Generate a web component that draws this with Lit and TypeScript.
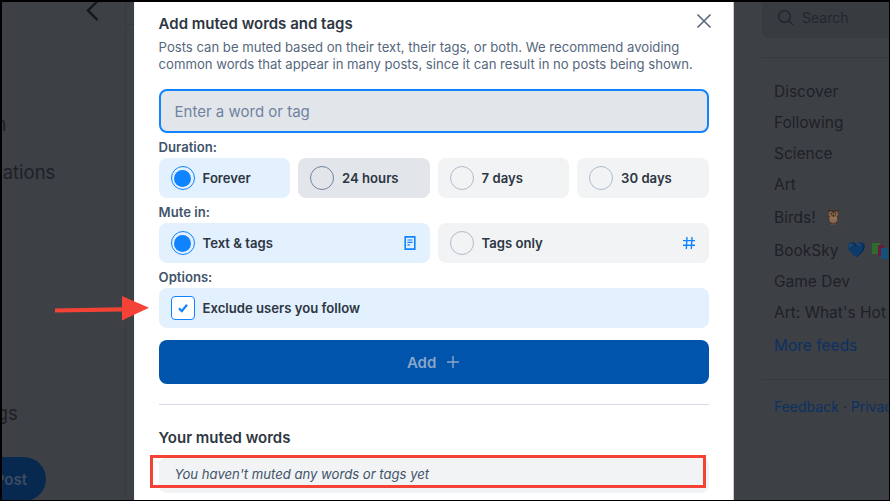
import { LitElement, html, css } from "lit";
import { customElement } from "lit/decorators.js";

const radio = (label: string, on: boolean, extra = "", icon: unknown = "") => html`
  <div class="opt ${on ? "on" : ""} ${extra}">
    <span class="radio"><i></i></span><span class="optlabel">${label}</span>${icon}
  </div>`;

const docIcon = html`<svg class="endicon" viewBox="0 0 14 14" width="14" height="14" fill="none">
  <path d="M2.2.9h9.6v12.2H2.2z" stroke="#1083fe" stroke-width="1.6"/>
  <path d="M4.4 4h5.2M4.4 6.4h5.2M4.4 8.8h2.6" stroke="#1083fe" stroke-width="1.2"/>
</svg>`;
const hashIcon = html`<svg class="endicon" viewBox="0 0 14 14" width="14" height="14" fill="none" stroke="#1083fe" stroke-width="1.4">
  <path d="M5 1 4.3 13M10 1 9.3 13M1 4.6h12M1 9.2h12"/>
</svg>`;

@customElement("app-root")
export class AppRoot extends LitElement {
  static styles = css`
    :host { display: block; width: 890px; height: 501px; font-family: Inter, "Liberation Sans", sans-serif; }
    * { box-sizing: border-box; }
    .frame { position: relative; width: 890px; height: 501px; background: #000; padding: 2px 1px 1px 2px; overflow: hidden; }
    .page { display: flex; height: 498px; background: #3d4045; overflow: hidden; }

    .left { position: relative; width: 132px; flex: none; overflow: hidden; color: #1d2127; font-size: 18.5px; }
    .rule-v { height: 100%; width: 124px; border-right: 1px solid #373a3f; }
    .rule-h { position: absolute; left: 123px; top: 22px; width: 10px; border-top: 1px solid #373a3f; }
    .chev { position: absolute; left: 83px; top: -4px; }
    .nav { position: absolute; white-space: nowrap; line-height: 22px; }
    .nav.a { left: -57px; top: 111px; }
    .nav.b { left: -57px; top: 159px; }
    .nav.c { left: -55px; top: 400px; }
    .post { position: absolute; left: -60px; top: 455px; width: 104px; height: 44px; border-radius: 22px; background: #08294f; color: #3d4c5f; font-size: 15px; font-weight: 600; display: flex; align-items: center; justify-content: flex-end; padding-right: 19px; }

    .modal { width: 599px; flex: none; background: #fff; padding: 13px 24.4px 0 23.6px; border-left: 1px solid #f2f4f6; color: #2d3642; position: relative; overflow: hidden; }
    .close { position: absolute; right: 21px; top: 11px; }
    h1 { margin: 0; font-size: 15px; line-height: 18px; font-weight: 600; color: #2d3642; }
    .desc { margin: 6px 0 0; font-size: 13.125px; line-height: 17px; color: #56677d; white-space: nowrap; }
    .input { margin-top: 16px; height: 44px; border: 2px solid #1083fe; border-radius: 8px; background: #e2e6eb; color: #6f839f; font-size: 15px; display: flex; align-items: center; padding-left: 14px; }
    .label { font-size: 13.125px; font-weight: 600; line-height: 16px; color: #42546a; margin: 6px 0 3px; }
    .row { display: flex; gap: 8px; margin-bottom: 6px; }
    .opt { flex: 1 1 0; height: 40px; border-radius: 8px; background: #f1f3f5; display: flex; align-items: center; gap: 8px; padding: 0 12px; font-size: 13.125px; font-weight: 600; color: #2d3642; min-width: 0; }
    .opt.on { background: #e3f0fe; }
    .opt.hover { background: #e2e6eb; }
    .radio { width: 24px; height: 24px; flex: none; border-radius: 50%; border: 1px solid #afbdcc; background: transparent; display: flex; align-items: center; justify-content: center; }
    .hover .radio { border-color: #6f839f; }
    .on .radio { border-color: #1083fe; border-width: 1.5px; }
    .radio i { display: none; width: 17px; height: 17px; border-radius: 50%; background: #1083fe; }
    .on .radio i { display: block; }
    .optlabel { flex: 1; white-space: nowrap; }
    .endicon { margin-right: 1px; flex: none; }
    .check { width: 24px; height: 24px; flex: none; border-radius: 4px; border: 1px solid #1083fe; background: #fff; display: flex; align-items: center; justify-content: center; }
    .add { margin-top: 12px; height: 44px; border-radius: 8px; background: #0054ab; color: #8aa6c9; font-size: 15px; font-weight: 600; display: flex; align-items: center; justify-content: center; gap: 10px; }
    .divider { margin-top: 20px; border-top: 1px solid #d4dbe2; }
    h2 { margin: 24px 0 0; font-size: 15px; line-height: 18px; font-weight: 600; color: #2d3642; }
    .empty { margin-top: 10px; height: 36px; border-radius: 8px; background: #f1f3f5; padding: 9px 16px 0; font-size: 13.125px; line-height: 16px; font-style: italic; color: #42546a; }

    .right { flex: 1; min-width: 0; overflow: hidden; color: #1d2127; font-size: 15.5px; position: relative; border-left: 1px solid #c8ccd2; background: #3d4045; }
    .search { position: absolute; left: 28px; top: -14px; width: 140px; height: 50px; border-radius: 8px; background: #383b40; display: flex; align-items: flex-end; gap: 8px; padding: 0 0 12px 15px; color: #23272d; font-size: 14px; }
    .rule { position: absolute; left: 28px; width: 140px; border-top: 1px solid #36393e; }
    .rule.top { top: 55px; }
    .rule.bottom { top: 377px; }
    .feeds { position: absolute; left: 40px; top: 74px; display: flex; flex-direction: column; white-space: nowrap; }
    .feeds > div { height: 31px; line-height: 31px; display: flex; align-items: center; }
    .feeds > .tall { height: 33px; margin-top: 1px; }
    .feeds > .tall + .tall { margin-top: 0; margin-bottom: -1px; }
    .feeds > .more { color: #0c3162; margin-top: 2px; }
    .foot { position: absolute; left: 40px; top: 396px; font-size: 14px; color: #0c3162; white-space: nowrap; }
    .foot b { font-weight: 400; color: #23272d; }
    .emoji { font-family: "Noto Color Emoji", sans-serif; font-size: 15px; line-height: 1; filter: brightness(.6); margin-left: 9px; }
    .emoji.heart { margin-left: 9px; filter: brightness(.5); }
    .books { margin-left: 6px; flex: none; }

    .arrow { position: absolute; left: 54px; top: 294px; }
    .mark { position: absolute; left: 150px; top: 455px; width: 556px; height: 33px; border: 3px solid #f44336; }
  `;

  render() {
    return html`<div class="frame">
      <div class="page">
        <div class="left">
          <div class="rule-v"></div>
          <div class="rule-h"></div>
          <svg class="chev" width="16" height="24" viewBox="0 0 16 24" fill="none"><path d="M12.5 3 3 12.5 12.5 22" stroke="#14171b" stroke-width="2.4"/></svg>
          <div class="nav a">Search</div>
          <div class="nav b">Notifications</div>
          <div class="nav c">Settings</div>
          <div class="post">Post</div>
        </div>
        <div class="modal">
          <svg class="close" width="16" height="16" viewBox="0 0 16 16" fill="none"><path d="M1.5 1.5l13 13M14.5 1.5l-13 13" stroke="#56677d" stroke-width="1.6"/></svg>
          <h1>Add muted words and tags</h1>
          <p class="desc">Posts can be muted based on their text, their tags, or both. We recommend avoiding<br/>common words that appear in many posts, since it can result in no posts being shown.</p>
          <div class="input">Enter a word or tag</div>
          <div class="label">Duration:</div>
          <div class="row">
            ${radio("Forever", true)}${radio("24 hours", false, "hover")}${radio("7 days", false)}${radio("30 days", false)}
          </div>
          <div class="label">Mute in:</div>
          <div class="row">
            ${radio("Text & tags", true, "", docIcon)}${radio("Tags only", false, "", hashIcon)}
          </div>
          <div class="label">Options:</div>
          <div class="row">
            <div class="opt on">
              <span class="check"><svg width="12" height="12" viewBox="0 0 12 12" fill="none"><path d="M2 6.4 4.8 9.2 10 2.8" stroke="#1083fe" stroke-width="2.2"/></svg></span>
              <span class="optlabel">Exclude users you follow</span>
            </div>
          </div>
          <div class="add">Add <svg width="14" height="14" viewBox="0 0 14 14" fill="none"><path d="M7 1v12M1 7h12" stroke="#8aa6c9" stroke-width="1.4"/></svg></div>
          <div class="divider"></div>
          <h2>Your muted words</h2>
          <div class="empty">You haven't muted any words or tags yet</div>
        </div>
        <div class="right">
          <div class="search">
            <svg width="17" height="17" viewBox="0 0 17 17" fill="none"><circle cx="7.5" cy="7.5" r="5.8" stroke="#23272d" stroke-width="1.5"/><path d="M12 12l4 4" stroke="#23272d" stroke-width="1.5"/></svg>
            <span>Search</span>
          </div>
          <div class="rule top"></div>
          <div class="feeds">
            <div>Discover</div><div>Following</div><div>Science</div><div>Art</div>
            <div class="tall">Birds!<span class="emoji">🦉</span></div>
            <div class="tall">BookSky<span class="emoji heart">💙</span><svg class="books" width="16" height="16" viewBox="0 0 16 16"><rect x="0" y="0" width="8" height="11" fill="#2f6b2f"/><rect x="6" y="2" width="6" height="11" fill="#6a1a3c"/><rect x="9" y="5" width="7" height="11" fill="#14527a"/></svg></div>
            <div>Game Dev</div><div>Art: What's Hot</div>
            <div class="more">More feeds</div>
          </div>
          <div class="rule bottom"></div>
          <div class="foot">Feedback <b>·</b> Privacy</div>
        </div>
      </div>
      <svg class="arrow" width="98" height="28" viewBox="0 0 98 28"><path d="M1 14.6 68 13.2V2L95 13.8 68 26.5V17.4L1 18.6z" fill="#f44336"/></svg>
      <div class="mark"></div>
    </div>`;
  }
}
